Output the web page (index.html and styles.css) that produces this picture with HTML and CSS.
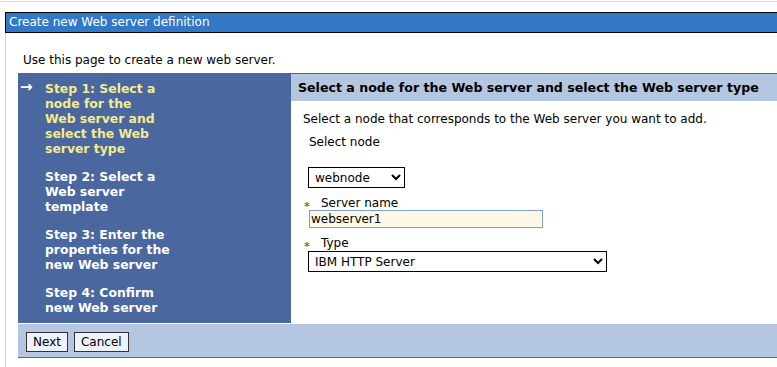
FILE: index.html
```html
<!DOCTYPE html>
<html lang="en">
<head>
  <meta charset="UTF-8" />
  <title>Create new Web server definition</title>
  <link rel="stylesheet" href="styles.css">
</head>
<body>
<div class="topline"></div>
<div class="portlet">
  <div class="portlet-title">Create new Web server definition</div>
  <div class="portlet-body">
    <p class="intro">Use this page to create a new web server.</p>

    <div class="wizard">
      <div class="steps">
        <div class="step current"><span class="arrow">&rarr;</span><span>Step 1: Select a<br>node for the<br>Web server and<br>select the Web<br>server type</span></div>
        <div class="step"><span class="arrow"></span><span>Step 2: Select a<br>Web server<br>template</span></div>
        <div class="step"><span class="arrow"></span><span>Step 3: Enter the<br>properties for the<br>new Web server</span></div>
        <div class="step"><span class="arrow"></span><span>Step 4: Confirm<br>new Web server</span></div>
      </div>

      <div class="panel">
        <div class="panel-head">Select a node for the Web server and select the Web server type</div>
        <div class="panel-body">
          <p class="hint">Select a node that corresponds to the Web server you want to add.</p>
          <div class="field-label plain">Select node</div>
          <select class="node-select">
            <option>webnode</option>
          </select>
          <div class="field-label"><span class="req">*</span>Server name</div>
          <input class="text-input" type="text" value="webserver1">
          <div class="field-label"><span class="req">*</span>Type</div>
          <select class="type-select">
            <option>IBM HTTP Server</option>
          </select>
        </div>
      </div>

      <div class="wizard-foot">
        <button class="btn">Next</button>
        <button class="btn">Cancel</button>
      </div>
    </div>
  </div>
</div>
</body>
</html>
```

FILE: styles.css
```css
body { margin: 0; font-family: "DejaVu Sans", Verdana, sans-serif; font-size: 12px; color: #000; background: #fff; overflow: hidden; }
.topline { height: 1px; margin-top: 1px; background: #d6d6d6; }
.portlet { margin: 10px 0 0 5px; border-left: 1px solid #d6d6d6; height: 355px; }
.portlet-title { background: #3178c6; color: #fff; border: 1px solid #000; border-right: none; margin-left: -1px; height: 19px; line-height: 19px; padding-left: 3px; font-size: 12px; }
.portlet-body { padding: 0 0 0 12px; }
.intro { margin: 0; padding: 20px 0 0 5px; height: 20px; line-height: 15px; }

.wizard { display: grid; grid-template-columns: 273px 1fr; border-top: 1px solid #4a67a0; }
.steps { background: #4a67a0; padding: 7px 0 8px 2px; }
.step { display: flex; color: #fff; font-weight: bold; font-size: 12.4px; line-height: 15px; margin-bottom: 13px; white-space: nowrap; }
.step:last-child { margin-bottom: 0; }
.step .arrow { width: 25px; flex: none; font-size: 15px; font-weight: bold; line-height: 13px; }
.step.current { color: #f5ec8c; }
.step.current .arrow { color: #fff; }

.panel-head { background: #b4c6e0; font-weight: bold; font-size: 12.6px; height: 27px; line-height: 28px; padding-left: 7px; white-space: nowrap; }
.panel-body { padding: 10px 0 0 12px; }
.hint { margin: 0; line-height: 16px; }
.field-label { line-height: 15px; padding-left: 18px; position: relative; }
.field-label.plain { padding-left: 6px; margin-top: 8px; }
.req { position: absolute; left: 1px; top: 3px; color: #7d6f22; font-size: 11px; font-weight: bold; }

select { font-family: inherit; font-size: 12px; border: 1px solid #000; border-radius: 0; background: #fff; height: 21px; padding: 0 2px; display: block; box-sizing: border-box; }
.node-select { width: 97px; margin: 17px 0 8px 5px; }
.type-select { width: 299px; margin: 0 0 0 5px; }
.text-input { display: block; width: 234px; height: 18px; box-sizing: border-box; margin: -1px 0 8px 6px; border: 1px solid #7c9fd0; background: #fff8e4; font-family: inherit; font-size: 12px; padding: 0 1px; }

.wizard-foot { grid-column: 1 / 3; background: #b4c6e0; border-top: 1px solid #fff; border-bottom: 1px solid #4a67a0; height: 35px; padding: 8px 0 0 8px; box-sizing: border-box; display: flex; gap: 6px; align-items: flex-start; }
.btn { font-family: inherit; font-size: 12px; background: #eef3fb; border: 1px solid #333; border-radius: 0; height: 20px; padding: 0 6px; }
```
